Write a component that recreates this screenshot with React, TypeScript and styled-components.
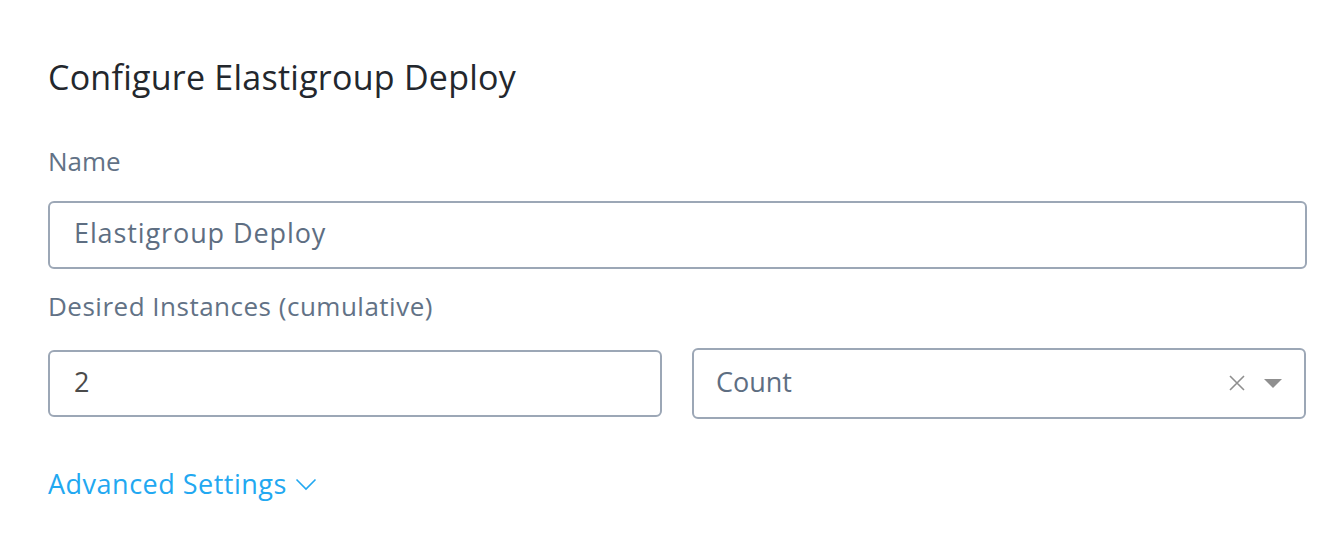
import React from "react";
import styled, { createGlobalStyle } from "styled-components";

const GlobalStyle = createGlobalStyle`
  body {
    margin: 0;
    background: #ffffff;
    font-family: "Open Sans", Lato, sans-serif;
  }
`;

const Page = styled.div`
  width: 1340px;
  height: 544px;
  box-sizing: border-box;
  padding: 54px 33px 0 48px;
  display: flex;
  flex-direction: column;
  align-items: stretch;
`;

const Title = styled.h1`
  margin: 0 0 46px;
  font-size: 34px;
  font-weight: 400;
  line-height: 46px;
  letter-spacing: 0.25px;
  color: #23272d;
`;

const Label = styled.label<{ $spacing?: number }>`
  display: block;
  font-size: 26px;
  line-height: 30px;
  letter-spacing: ${(p) => p.$spacing ?? 0}px;
  color: #627286;
`;

const Field = styled.div<{ $gap: number; $mb?: number }>`
  display: flex;
  flex-direction: column;
  gap: ${(p) => p.$gap}px;
  margin-bottom: ${(p) => p.$mb ?? 0}px;
`;

const Box = styled.div<{ $height: number; $dark?: boolean }>`
  box-sizing: border-box;
  height: ${(p) => p.$height}px;
  border: 2px solid #9ca7b6;
  border-radius: 6px;
  display: flex;
  align-items: center;
  padding: 0 24px 5px;
  font-size: 27px;
  letter-spacing: 0.9px;
  color: ${(p) => (p.$dark ? "#4b4b4b" : "#5e6e82")};
`;

const Row = styled.div`
  display: grid;
  grid-template-columns: 614px 614px;
  column-gap: 30px;
  align-items: center;
`;

const Select = styled(Box)`
  padding: 0 22px 5px 22px;
  justify-content: space-between;
  letter-spacing: 0;
`;

const Actions = styled.div`
  display: flex;
  align-items: center;
  gap: 19px;
  padding-top: 4px;
`;

const LinkRow = styled.div`
  margin-top: 49px;
`;

const Link = styled.a`
  display: inline-flex;
  align-items: center;
  gap: 8px;
  font-size: 27px;
  line-height: 32px;
  letter-spacing: 0.5px;
  color: #22a8f1;
  cursor: pointer;
`;

export default function App() {
  return (
    <>
      <GlobalStyle />
      <Page>
        <Title>Configure Elastigroup Deploy</Title>
        <Field $gap={25} $mb={22}>
          <Label>Name</Label>
          <Box $height={68}>Elastigroup Deploy</Box>
        </Field>
        <Field $gap={27}>
          <Label $spacing={0.5}>Desired Instances (cumulative)</Label>
          <Row>
            <Box $height={67} $dark>2</Box>
            <Select $height={71}>
              <span>Count</span>
              <Actions>
                <svg width="16" height="16" viewBox="0 0 16 16">
                  <path d="M1 1L15 15M15 1L1 15" stroke="#8f8f8f" strokeWidth="1.6" />
                </svg>
                <svg width="18" height="9" viewBox="0 0 18 9">
                  <path d="M0 0H18L9 9Z" fill="#8f8f8f" />
                </svg>
              </Actions>
            </Select>
          </Row>
        </Field>
        <LinkRow>
          <Link>
            Advanced Settings
            <svg width="22" height="13" viewBox="0 0 22 13">
              <path d="M1.5 1.5L11 11L20.5 1.5" stroke="#22a8f1" strokeWidth="1.6" fill="none" />
            </svg>
          </Link>
        </LinkRow>
      </Page>
    </>
  );
}
